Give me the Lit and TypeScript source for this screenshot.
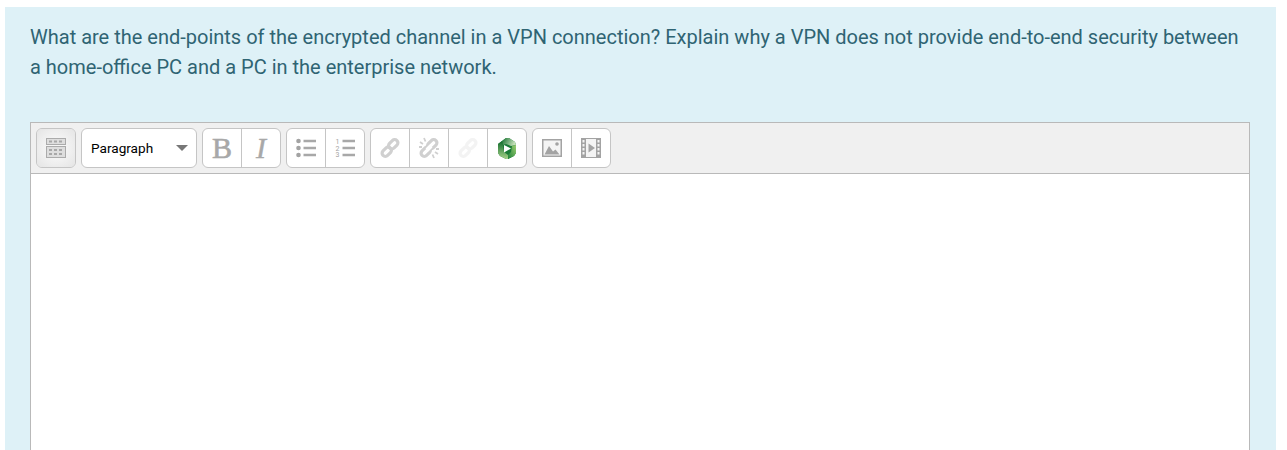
import { LitElement, css, html, svg } from "lit";
import { customElement } from "lit/decorators.js";

const kitchen = svg`<svg width="20" height="20" viewBox="0 0 20 20">
  <path fill="#ababab" d="M0 0h20v7H0zM0 8h20v12H0z"/>
  <path fill="#dedede" d="M1 1h18v5H1zM1 9h18v10H1z"/>
  <path fill="#a8a8a8" d="M3 2.500h3v2H3zM8 2.500h3v2H8zM13 2.500h3v2h-3zM3 11h3v2H3zM8 11h3v2H8zM13 11h3v2h-3zM3 15h3v2H3zM8 15h3v2H8zM13 15h3v2h-3z"/>
</svg>`;

const bullets = svg`<svg width="20" height="20" viewBox="0 0 20 20">
  <circle cx="2.500" cy="3" r="2.300" fill="#a3a3a3"/><circle cx="2.500" cy="10" r="2.300" fill="#a3a3a3"/><circle cx="2.500" cy="17" r="2.300" fill="#a3a3a3"/>
  <path stroke="#a8a8a8" stroke-width="2.400" d="M7.500 3H20M7.500 10H20M7.500 17H20"/>
</svg>`;

const numbers = svg`<svg width="20" height="20" viewBox="0 0 20 20">
  <path stroke="#a8a8a8" stroke-width="2.400" d="M7.500 3H20M7.500 10H20M7.500 17H20"/>
  <g fill="#a3a3a3" font-family="Roboto, sans-serif" font-size="7">
    <text x="0.500" y="6">1</text><text x="0.500" y="12.500">2</text><text x="0.500" y="19">3</text>
  </g>
</svg>`;

const link = (opacity: number, broken = false) => svg`<svg width="22" height="22" viewBox="0 0 22 22" opacity=${opacity}>
  <g fill="none" stroke="#d0d0d0" stroke-width="3.200">
    <rect x="9" y="4" width="10.500" height="6.500" rx="3.250" transform="rotate(-45 14.250 7.250)"/>
    <rect x="2.500" y="11.500" width="10.500" height="6.500" rx="3.250" transform="rotate(-45 7.750 14.750)"/>
  </g>
  ${broken ? svg`<path stroke="#fff" stroke-width="4" d="M9 13l4-4"/>
    <path stroke="#d0d0d0" stroke-width="1.800" d="M2 5l3 2M6 1l1.500 3.500M16 21l-1.500-3.500M20 17l-3-2M1 10h3M18 12h3"/>` : ""}
</svg>`;

const panopto = svg`<svg width="20" height="22" viewBox="0 0 20 22">
  <defs>
    <linearGradient id="a" x1="0" y1="0" x2="1" y2="0.300">
      <stop offset="0" stop-color="#14702f"/><stop offset="1" stop-color="#c4e0b8"/>
    </linearGradient>
    <linearGradient id="b" x1="0" y1="0" x2="0" y2="1">
      <stop offset="0" stop-color="#0f6a2b"/><stop offset="1" stop-color="#a5d188"/>
    </linearGradient>
    <linearGradient id="c" x1="1" y1="0" x2="0" y2="1">
      <stop offset="0" stop-color="#9ccf70"/><stop offset="1" stop-color="#1c8038"/>
    </linearGradient>
  </defs>
  <path fill="#1a7a36" d="M5 4l4-3h3l6 4 1 3v8l-2 3-6 3h-2l-6-3-2-3V7z"/>
  <path fill="url(#a)" d="M5 4l4-3h3l6 4 1 3-5 1-5-2-3 1z"/>
  <path fill="url(#b)" d="M1 7l4-3 1 5 1 6 4 3v4H9l-6-3-2-3z"/>
  <path fill="url(#c)" d="M19 8v8l-2 3-6 3v-4l3-3 1-6z"/>
  <path fill="#fff" d="M7 8l7 3.500-7 4z"/>
</svg>`;

const image = svg`<svg width="20" height="20" viewBox="0 0 20 20">
  <path fill="#a3a3a3" d="M0 1h20v18H0z"/>
  <path fill="#f4f4f4" d="M1.500 2.500h17v15h-17z"/>
  <circle cx="15" cy="6" r="1.800" fill="#a3a3a3"/>
  <path fill="#a3a3a3" d="M2.500 16.500L7 8l4 5.500 2.500-2 4 5z"/>
</svg>`;

const film = svg`<svg width="20" height="20" viewBox="0 0 20 20">
  <path fill="#a3a3a3" d="M0 0h20v20H0z"/>
  <path fill="#f4f4f4" d="M5 1h10v18H5zM1.500 2h2v2.500h-2zM1.500 6h2v2.500h-2zM1.500 10h2v2.500h-2zM1.500 14h2v2.500h-2zM16.500 2h2v2.500h-2zM16.500 6h2v2.500h-2zM16.500 10h2v2.500h-2zM16.500 14h2v2.500h-2z"/>
  <path fill="#a3a3a3" d="M7.500 5.500L14 10l-6.500 4.500z"/>
</svg>`;

@customElement("app-root")
export class AppRoot extends LitElement {
    static styles = css`
        :host {
            display: block;
            height: 450px;
            overflow: hidden;
            background: #fff;
            font-family: Roboto, sans-serif;
        }
        .panel {
            box-sizing: border-box;
            margin: 7px 11px 0 5px;
            height: 443px;
            padding: 15px 26px 0 25px;
            background: #def1f7;
        }
        .question {
            margin: 0 0 40px;
            padding-right: 10px;
            font-size: 20px;
            line-height: 30px;
            color: #2f6473;
        }
        .editor {
            height: 400px;
            border: 1px solid #b9b9b9;
            background: #fff;
        }
        .toolbar {
            box-sizing: border-box;
            display: flex;
            align-items: flex-start;
            gap: 5px;
            height: 51px;
            padding: 5px 5px 0;
            background: #f0f0f0;
            border-bottom: 1px solid #b9b9b9;
        }
        .group {
            display: flex;
            height: 40px;
            box-sizing: border-box;
            border: 1px solid #c5c5c5;
            border-radius: 6px;
            background: #fff;
            overflow: hidden;
        }
        .btn {
            display: flex;
            align-items: center;
            justify-content: center;
            width: 38px;
            color: #a8a8a8;
        }
        .btn + .btn {
            border-left: 1px solid #c5c5c5;
        }
        .on {
            background: radial-gradient(circle, #f6f6f6 30%, #e4e4e4 100%);
        }
        .select {
            box-sizing: border-box;
            display: flex;
            align-items: center;
            justify-content: space-between;
            width: 116px;
            padding: 0 8px 0 9px;
            font-size: 13.6px;
            color: #000;
        }
        .caret {
            width: 0;
            height: 0;
            border-left: 6px solid transparent;
            border-right: 6px solid transparent;
            border-top: 6px solid #777;
        }
        .bold,
        .italic {
            font-family: "Liberation Serif", serif;
            font-size: 30px;
            line-height: 1;
        }
        .bold {
            font-weight: 400;
            -webkit-text-stroke: 0.6px #a8a8a8;
        }
        .italic {
            font-style: italic;
            -webkit-text-stroke: 0.4px #a8a8a8;
        }
    `;

    render() {
        return html`
            <div class="panel">
                <p class="question">
                    What are the end-points of the encrypted channel in a VPN connection? Explain why a VPN does not provide end-to-end security between a home-office PC and a PC in the enterprise network.
                </p>
                <div class="editor">
                    <div class="toolbar">
                        <div class="group"><div class="btn on">${kitchen}</div></div>
                        <div class="group select">Paragraph<span class="caret"></span></div>
                        <div class="group">
                            <div class="btn bold">B</div>
                            <div class="btn italic">I</div>
                        </div>
                        <div class="group">
                            <div class="btn">${bullets}</div>
                            <div class="btn">${numbers}</div>
                        </div>
                        <div class="group">
                            <div class="btn">${link(1)}</div>
                            <div class="btn">${link(1, true)}</div>
                            <div class="btn">${link(0.25)}</div>
                            <div class="btn">${panopto}</div>
                        </div>
                        <div class="group">
                            <div class="btn">${image}</div>
                            <div class="btn">${film}</div>
                        </div>
                    </div>
                </div>
            </div>
        `;
    }
}
